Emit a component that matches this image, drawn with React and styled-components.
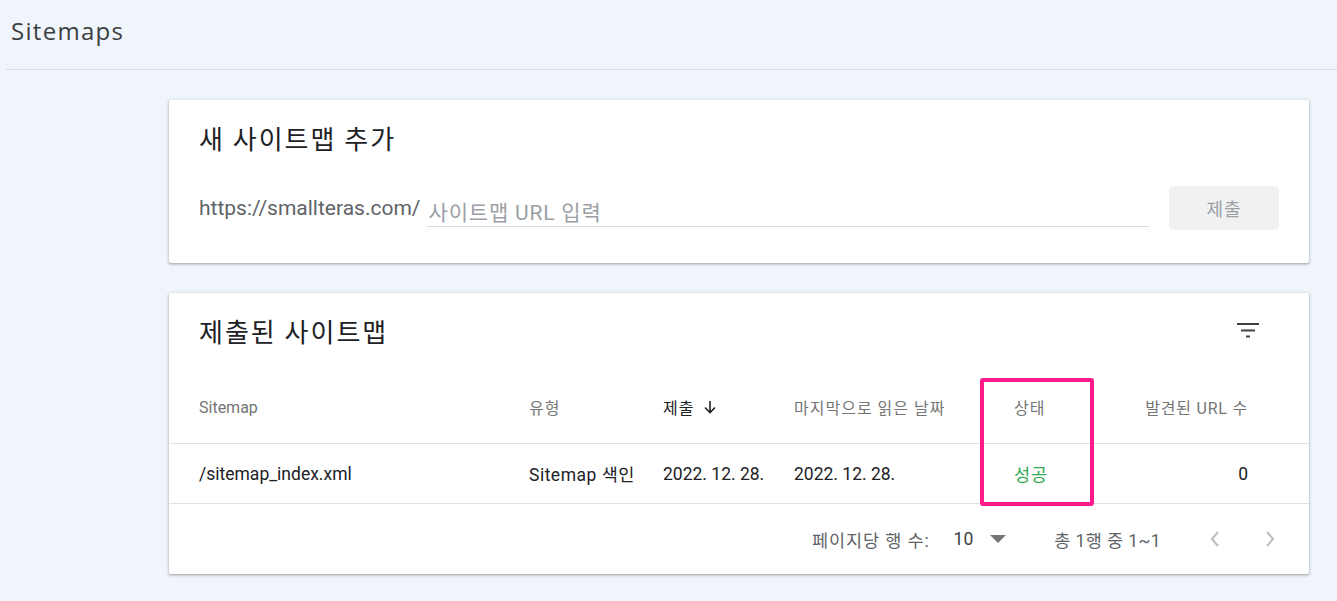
import React from 'react'
import styled, { createGlobalStyle } from 'styled-components'

const Global = createGlobalStyle`
  html, body {
    margin: 0;
    padding: 0;
    background: #f0f4fb;
  }
  body {
    font-family: Roboto, "Noto Sans CJK KR", sans-serif;
    color: #202124;
  }
`

const Page = styled.div`
  width: 1337px;
  height: 601px;
  overflow: hidden;
`

const TopBar = styled.header`
  height: 70px;
  margin-left: 6px;
  border-bottom: 1px solid #dadce0;
  display: flex;
  align-items: center;
  padding-left: 5px;
  padding-bottom: 8px;
  box-sizing: border-box;
`

const PageTitle = styled.h1`
  margin: 0;
  font-family: "Open Sans", Roboto, sans-serif;
  font-size: 24px;
  letter-spacing: 1.3px;
  font-weight: 400;
  color: #3c4043;
`

const Main = styled.main`
  padding: 30px 28px 0 169px;
  display: flex;
  flex-direction: column;
  gap: 30px;
`

const Card = styled.section`
  position: relative;
  background: #fff;
  border-radius: 2px;
  box-shadow: 0 1px 2px rgba(60, 64, 67, 0.3), 0 1px 3px 1px rgba(60, 64, 67, 0.15);
  width: 1140px;
`

const CardTitle = styled.h2`
  margin: 0;
  height: 36px;
  line-height: 36px;
  font-family: "Noto Sans CJK KR", sans-serif;
  font-size: 26px;
  letter-spacing: 2px;
  font-weight: 400;
  color: #202124;
`

const AddBody = styled.div`
  padding: 20px 30px 33px 30px;
`

const UrlRow = styled.div`
  margin-top: 30px;
  display: flex;
  align-items: center;
  height: 44px;
`

const Prefix = styled.span`
  font-size: 21px;
  color: #5f6368;
  margin-right: 6px;
  white-space: nowrap;
`

const UrlInput = styled.div`
  flex: 1;
  height: 34px;
  margin-top: 4px;
  border-bottom: 1px solid #dadce0;
  display: flex;
  align-items: center;
  padding-top: 2px;
  box-sizing: border-box;
`

const Placeholder = styled.span`
  font-family: Roboto, "Noto Sans CJK KR", sans-serif;
  font-size: 21px;
  letter-spacing: 0.8px;
  color: #9aa0a6;
  padding-left: 2px;
`

const SubmitButton = styled.button`
  margin-left: 20px;
  width: 110px;
  height: 44px;
  border: none;
  border-radius: 4px;
  background: #f1f1f1;
  color: #9aa0a6;
  font-family: "Noto Sans CJK KR", sans-serif;
  font-size: 18px;
  letter-spacing: 1px;
`

const ListHead = styled.div`
  padding: 20px 30px 0 30px;
  display: flex;
  align-items: center;
  justify-content: space-between;
`

const FilterButton = styled.div`
  width: 36px;
  height: 36px;
  display: flex;
  align-items: center;
  justify-content: center;
  margin-right: 13px;
`

const Row = styled.div`
  display: grid;
  grid-template-columns: 330px 134px 131px 220px 94px 140px;
  align-items: center;
  padding: 0 61px 0 30px;
  box-sizing: border-box;
  height: ${p => p.$h}px;
  border-bottom: ${p => (p.$line ? '1px solid #e0e0e0' : 'none')};
  margin-top: ${p => p.$top || 0}px;
`

const Th = styled.div`
  font-family: Roboto, "Noto Sans CJK KR", sans-serif;
  font-size: 16px;
  letter-spacing: ${p => p.$ls || 0}px;
  color: ${p => (p.$active ? '#202124' : '#757575')};
  display: flex;
  align-items: center;
  gap: 8px;
  white-space: nowrap;
  justify-content: ${p => (p.$right ? 'flex-end' : 'flex-start')};
`

const Td = styled.div`
  font-family: Roboto, "Noto Sans CJK KR", sans-serif;
  font-size: 17.5px;
  letter-spacing: ${p => p.$ls || 0}px;
  color: ${p => p.$color || '#202124'};
  text-align: ${p => (p.$right ? 'right' : 'left')};
  white-space: nowrap;
`

const Footer = styled.div`
  height: 70px;
  display: flex;
  align-items: center;
  justify-content: flex-end;
  padding-right: 33px;
  font-family: Roboto, "Noto Sans CJK KR", sans-serif;
  font-size: 17.5px;
  color: #5f6368;
`

const PerPage = styled.span`
  letter-spacing: 0.9px;
  margin-right: 24px;
`

const PageSize = styled.span`
  color: #3c4043;
  margin-right: 16px;
`

const Range = styled.span`
  letter-spacing: 0.4px;
  margin-left: 47px;
  margin-right: 48px;
`

const Pager = styled.div`
  display: flex;
  gap: 43px;
`

const Highlight = styled.div`
  position: absolute;
  left: 811px;
  top: 85px;
  width: 114px;
  height: 128px;
  border: 4px solid #ff1a8c;
  border-radius: 3px;
  box-sizing: border-box;
  pointer-events: none;
`

const FilterIcon = () => (
  <svg width="24" height="24" viewBox="0 0 24 24">
    <path d="M1 5h22M5 11.5h14M10 17.5h4" stroke="#3c4043" strokeWidth="2" fill="none" />
  </svg>
)

const ArrowDown = () => (
  <svg width="16" height="16" viewBox="0 0 16 16">
    <path d="M8 2v11M3 8.5l5 5 5-5" stroke="#202124" strokeWidth="1.6" fill="none" />
  </svg>
)

const Caret = () => (
  <svg width="18" height="10" viewBox="0 0 18 10">
    <path d="M1 1h16L9 9z" fill="#757575" />
  </svg>
)

const Chevron = ({ dir }) => (
  <svg width="12" height="18" viewBox="0 0 12 18">
    <path
      d={dir === 'left' ? 'M9 2L3 9l6 7' : 'M3 2l6 7-6 7'}
      stroke="#bdbdbd"
      strokeWidth="2"
      fill="none"
    />
  </svg>
)

export default function App() {
  return (
    <Page>
      <Global />
      <TopBar>
        <PageTitle>Sitemaps</PageTitle>
      </TopBar>
      <Main>
        <Card>
          <AddBody>
            <CardTitle>새 사이트맵 추가</CardTitle>
            <UrlRow>
              <Prefix>https://smallteras.com/</Prefix>
              <UrlInput>
                <Placeholder>사이트맵 URL 입력</Placeholder>
              </UrlInput>
              <SubmitButton>제출</SubmitButton>
            </UrlRow>
          </AddBody>
        </Card>

        <Card>
          <ListHead>
            <CardTitle>제출된 사이트맵</CardTitle>
            <FilterButton>
              <FilterIcon />
            </FilterButton>
          </ListHead>
          <Row $h={73} $top={22} $line>
            <Th>Sitemap</Th>
            <Th $ls={1}>유형</Th>
            <Th $active $ls={1}>
              제출 <ArrowDown />
            </Th>
            <Th $ls={1}>마지막으로 읽은 날짜</Th>
            <Th $ls={1}>상태</Th>
            <Th $right $ls={0.8}>발견된 URL 수</Th>
          </Row>
          <Row $h={60} $line>
            <Td>/sitemap_index.xml</Td>
            <Td $ls={0.5}>Sitemap 색인</Td>
            <Td>2022. 12. 28.</Td>
            <Td>2022. 12. 28.</Td>
            <Td $color="#34a853" $ls={1}>성공</Td>
            <Td $right>0</Td>
          </Row>
          <Footer>
            <PerPage>페이지당 행 수:</PerPage>
            <PageSize>10</PageSize>
            <Caret />
            <Range>총 1행 중 1~1</Range>
            <Pager>
              <Chevron dir="left" />
              <Chevron dir="right" />
            </Pager>
          </Footer>
          <Highlight />
        </Card>
      </Main>
    </Page>
  )
}
